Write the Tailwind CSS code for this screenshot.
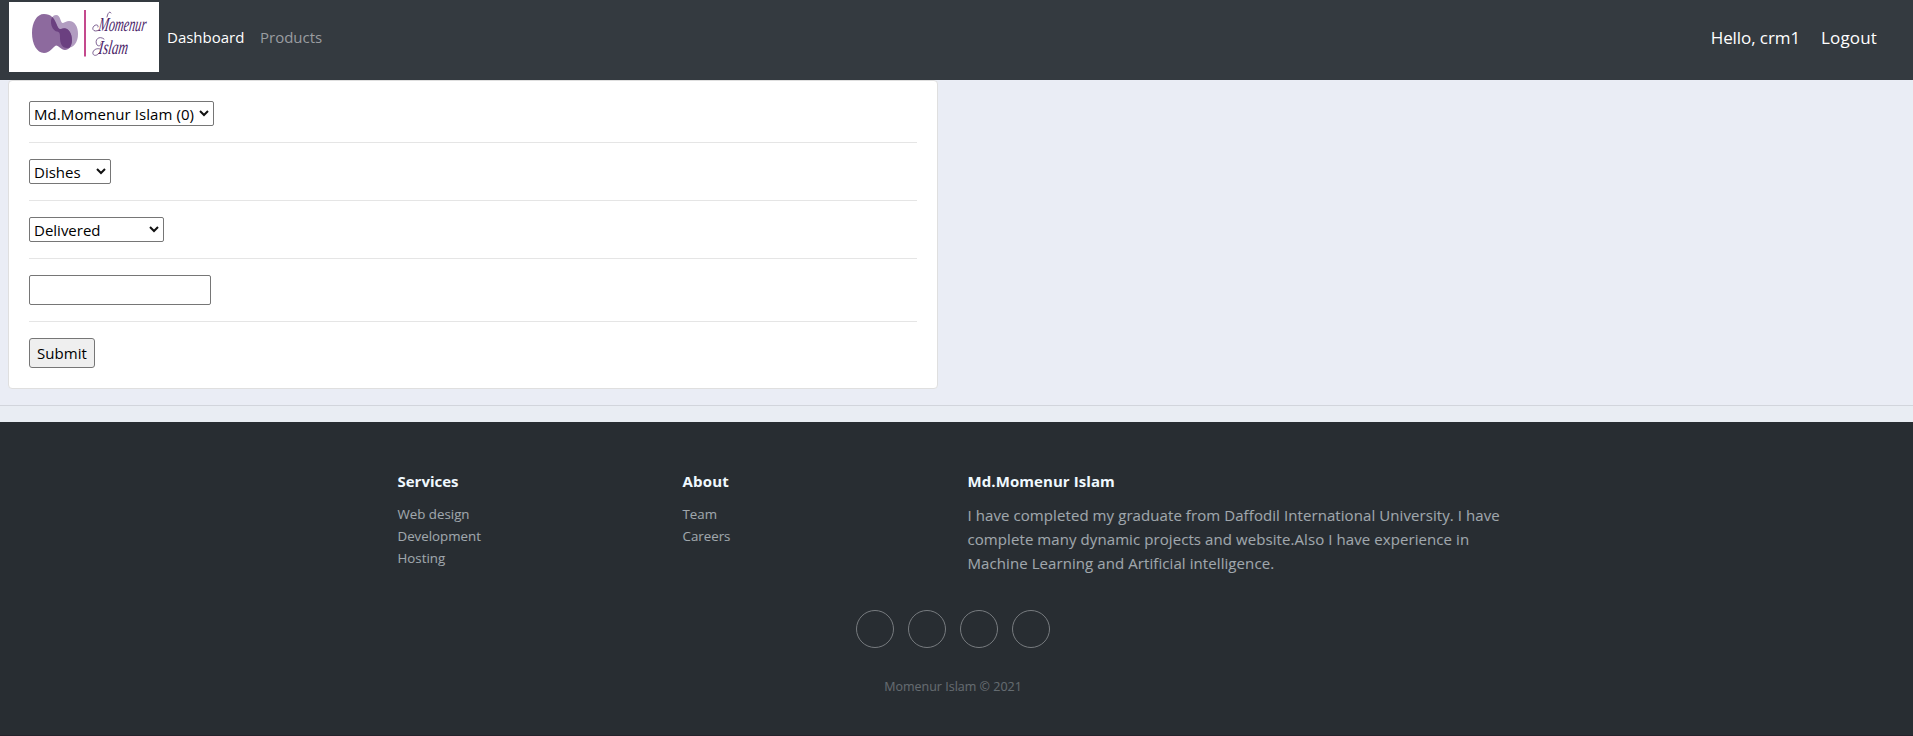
<!DOCTYPE html>
<html lang="en">
<head>
<meta charset="utf-8">
<title>Dashboard</title>
<script src="https://cdn.jsdelivr.net/npm/@tailwindcss/browser@4"></script>
</head>
<body class="h-[736px] overflow-hidden bg-[#eaedf5] font-['Open_Sans','Noto_Sans',sans-serif] text-[15px] leading-6 text-[#212529]">
<nav class="flex h-20 items-start bg-[#343a40] pl-[9px] pr-9">
  <svg class="mt-[2px] h-[70px] w-[150px] bg-white" viewBox="0 0 150 70" role="img" aria-label="Momenur Islam">
    <defs><clipPath id="blob"><path d="M35 12C42 12 45 16 47 21C49 25 49 27 52 27C59 24 63 31 63 38C63 44 60 48 56 48C52 48 50 43.500 47 43.500C44 45 41 51 35 51C28 51 23 42 23 31C23 20 28 12 35 12Z"/></clipPath></defs>
    <path d="M47 13C52 13 51 21 54 21C57 20 57 19 60 19C66 19 69 25 69 32C69 40 65 46 58 46C53 46 51 41 51 36C51 32 51 30 48 29.500C45 29 42 25 42 20C42 16 44 13 47 13Z" fill="#b29dc1"/>
    <path d="M35 12C42 12 45 16 47 21C49 25 49 27 52 27C59 24 63 31 63 38C63 44 60 48 56 48C52 48 50 43.500 47 43.500C44 45 41 51 35 51C28 51 23 42 23 31C23 20 28 12 35 12Z" fill="#8d6a9e"/>
    <path clip-path="url(#blob)" d="M47 13C52 13 51 21 54 21C57 20 57 19 60 19C66 19 69 25 69 32C69 40 65 46 58 46C53 46 51 41 51 36C51 32 51 30 48 29.500C45 29 42 25 42 20C42 16 44 13 47 13Z" fill="#6b4080"/>
    <path d="M76 8V54.500" stroke="#c4498d" stroke-width="2"/>
    <g fill="#4b2468" font-family="Liberation Serif, serif" font-style="italic" font-size="20">
      <text transform="translate(89 29) skewX(-8) scale(.61 1)">Momenur</text>
      <text transform="translate(89 52) skewX(-8) scale(.66 1)">Islam</text>
    </g>
    <g fill="none" stroke="#4b2468" stroke-width=".7" stroke-linecap="round">
      <path d="M90 28C85 31 82 27 85 24C87 22 90 23 89 25M98 15C99 10 101 9 102 11"/>
      <path d="M91 50C88 55 83 54 84 50C85 47 89 46 91 47M95 37C90 33 85 38 88 43C90 45 93 43 92 41"/>
    </g>
  </svg>
  <div class="ml-2 mt-[25px] flex gap-4"><a class="w-[77px] text-white">Dashboard</a><a class="text-[#9a9da0]">Products</a></div>
  <div class="ml-auto mt-[26px] flex gap-[21px] text-[17px] text-white"><span class="tracking-[-0.08px]">Hello, crm1</span><a class="tracking-[0.15px]">Logout</a></div>
</nav>
<main class="ml-2 h-[309px] w-[930px] rounded border border-[#dfdfdf] bg-white px-5 pt-5 tracking-[0.08px] text-black">
  <div class="flex h-[25px] w-[185px] items-center justify-between whitespace-nowrap rounded-[2px] border border-[#767676] pl-1 pr-[3px]"><span>Md.Momenur Islam (0)</span><svg class="-mt-px h-2 w-3 shrink-0" viewBox="0 0 12 8"><path d="M2 2L6 6L10 2" fill="none" stroke="#111" stroke-width="2"/></svg></div>
  <hr class="my-4 border-[#e5e5e5]">
  <div class="flex h-[25px] w-[82px] items-center justify-between rounded-[2px] border border-[#767676] pl-1 pr-[3px]"><span class="tracking-normal">Dishes</span><svg class="-mt-px h-2 w-3" viewBox="0 0 12 8"><path d="M2 2L6 6L10 2" fill="none" stroke="#111" stroke-width="2"/></svg></div>
  <hr class="my-4 border-[#e5e5e5]">
  <div class="flex h-[25px] w-[135px] items-center justify-between rounded-[2px] border border-[#767676] pl-1 pr-[3px]"><span class="tracking-normal">Delivered</span><svg class="-mt-px h-2 w-3" viewBox="0 0 12 8"><path d="M2 2L6 6L10 2" fill="none" stroke="#111" stroke-width="2"/></svg></div>
  <hr class="my-4 border-[#e5e5e5]">
  <input class="block h-[30px] w-[182px] rounded-[2px] border border-[#767676] bg-white">
  <hr class="my-4 border-[#e5e5e5]">
  <button class="block h-[30px] w-[66px] rounded-[3px] border border-[#767676] bg-[#efefef] pb-px">Submit</button>
</main>
<hr class="mt-4 border-[#d2d5dc]">
<div class="h-4 bg-[#e9edf3]"></div>
<footer class="h-[314px] border-b border-[#25222b] bg-[#282d32] pt-[50px] text-[#f0f9ff]">
  <div class="mx-auto flex w-[1140px] pl-[11px]">
    <section class="w-[285px]"><h3 class="mb-3 text-[15px] font-bold leading-[19px]">Services</h3><ul class="text-[13.3px] leading-[22px] opacity-60"><li>Web design</li><li>Development</li><li>Hosting</li></ul></section>
    <section class="w-[285px]"><h3 class="mb-3 text-[15px] font-bold leading-[19px] tracking-[0.2px]">About</h3><ul class="text-[13.3px] leading-[22px] opacity-60"><li>Team</li><li>Careers</li></ul></section>
    <section class="w-[559px]"><h3 class="mb-3 text-[15px] font-bold leading-[19px] tracking-[0.08px]">Md.Momenur Islam</h3><p class="tracking-[0.08px] opacity-60">I have completed my graduate from Daffodil International University. I have<br>complete many dynamic projects and website.Also I have experience in<br>Machine Learning and Artificial intelligence.</p></section>
  </div>
  <div class="mt-[35px] flex justify-center gap-[14px] pr-[7px]">
    <a class="size-[38px] rounded-full border border-[#777b7f]"></a>
    <a class="size-[38px] rounded-full border border-[#777b7f]"></a>
    <a class="size-[38px] rounded-full border border-[#777b7f]"></a>
    <a class="size-[38px] rounded-full border border-[#777b7f]"></a>
  </div>
  <p class="mt-[29px] pr-[7px] text-center text-[12.5px] leading-5 opacity-30">Momenur Islam © 2021</p>
</footer>
</body>
</html>
